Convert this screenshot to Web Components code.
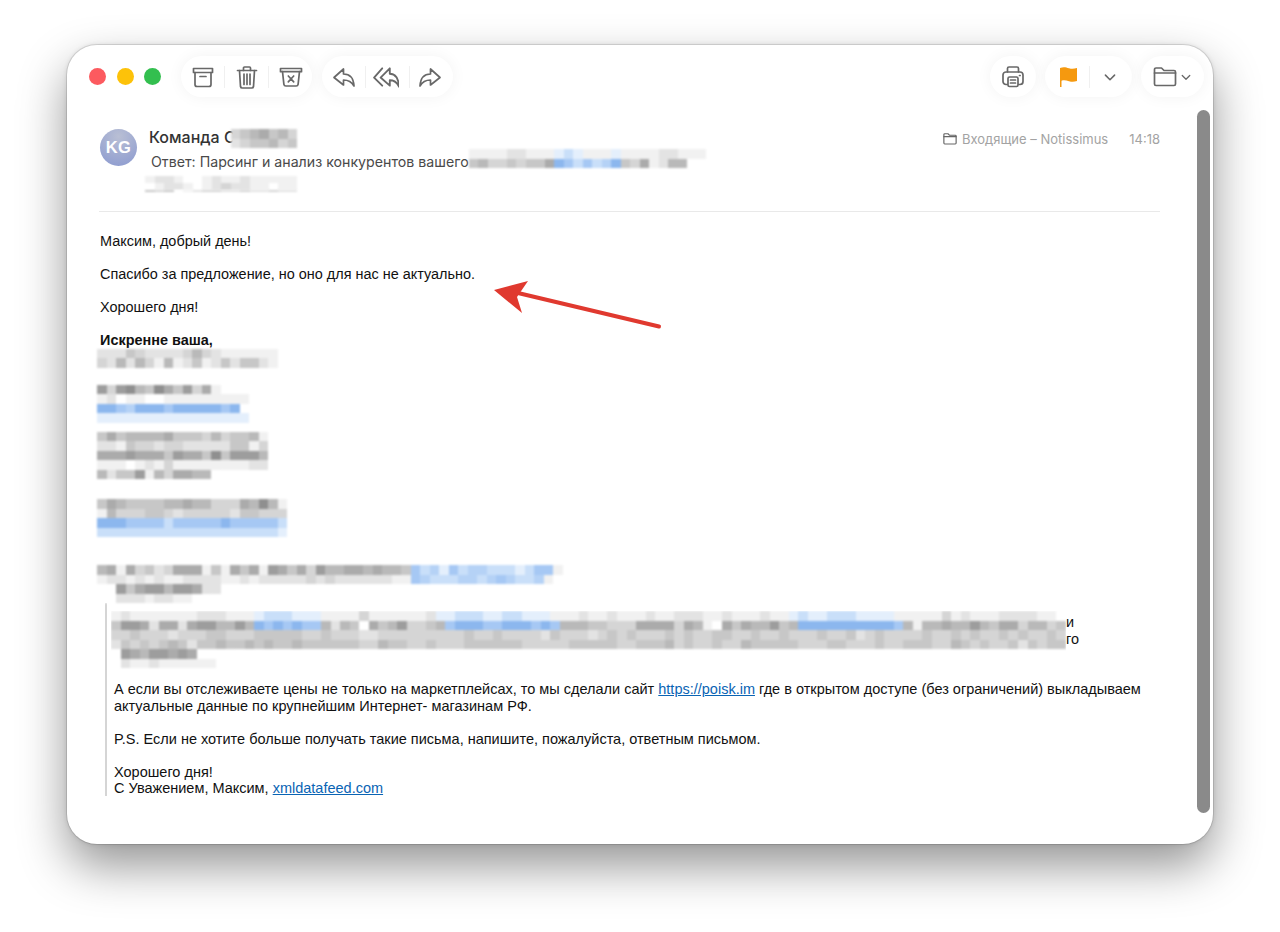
<!DOCTYPE html>
<html lang="ru">
<head>
<meta charset="utf-8">
<title>Mail</title>
<style>
  html, body { margin: 0; background: #fff; }
  body { padding: 45px 67px 0; height: 932px; box-sizing: border-box; overflow: hidden; }
</style>
</head>
<body>
<mail-window>
  <mail-toolbar></mail-toolbar>
  <mail-header></mail-header>
  <mail-body></mail-body>
</mail-window>

<script>
// redaction mosaic: each char of a row is one cell. 0-9 gray level, a-e blue
const CELL_COLORS = { a: "#a6c8f4", b: "#8cb7ee", c: "#c9dff9", d: "#e4effc", e: "#b5d2f6" };
const cellColor = (c) => {
  if (CELL_COLORS[c]) return CELL_COLORS[c];
  const v = 255 - Number(c) * 14;
  return `rgb(${v},${v},${v})`;
};

class PixelBlock extends HTMLElement {
  constructor() {
    super();
    this.attachShadow({ mode: "open" });
  }
  connectedCallback() {
    const rows = (this.getAttribute("rows") || "").split("|");
    const w = this.getAttribute("cw") || 9.5;
    const h = this.getAttribute("ch") || 9.5;
    const html = rows.map((r) => {
      const cells = [...r].map((c) => `<i style="background:${cellColor(c)}"></i>`).join("");
      return `<div class="r">${cells}</div>`;
    }).join("");
    this.shadowRoot.innerHTML = `
      <style>
        :host { display: block; flex: none; }
        .wrap { filter: blur(1px); }
        .r { display: flex; height: ${h}px; }
        i { display: block; width: ${w}px; flex: none; }
      </style>
      <div class="wrap">${html}</div>
    `;
  }
}

const ICONS = {
  archive: `<path d="M2.5 3.5h19v4h-19z"/><path d="M4 7.5V19.5a2 2 0 0 0 2 2h12a2 2 0 0 0 2-2V7.5"/><path d="M9 11.5h6"/>`,
  trash: `<path d="M2.5 5.5h19"/><path d="M8.5 5.5V3a1 1 0 0 1 1-1h5a1 1 0 0 1 1 1v2.5"/><path d="M4.5 5.5l1 16a1.8 1.8 0 0 0 1.8 1.5h9.4a1.8 1.8 0 0 0 1.8-1.5l1-16"/><path d="M9 9v10.5M12 9v10.5M15 9v10.5"/>`,
  junk: `<path d="M1.5 3.5h21v3.2h-21z"/><path d="M3.5 6.7l1.4 12.6a2 2 0 0 0 2 1.7h10.2a2 2 0 0 0 2-1.7l1.4-12.6"/><path d="M9.3 11l5.4 5.8M14.7 11l-5.4 5.8"/>`,
  reply: `<path d="M2 12.5L11.5 4v5c5.5 0 10 3 10.5 12-2.5-4.5-6-6-10.500-6v5z"/>`,
  replyall: `<path d="M8.500 4L1 12.500 8.500 20"/><path d="M7 12.500L15.500 4v5c4.500 0 8 3 8.500 12-2-4.500-5-6-8.500-6v5z"/>`,
  forward: `<path d="M22 12.500L12.500 4v5C7 9 2.500 12 2 21c2.500-4.500 6-6 10.500-6v5z"/>`,
  printer: `<path d="M6.500 7V3.500a1.500 1.500 0 0 1 1.500-1.500h8a1.500 1.500 0 0 1 1.500 1.500V7"/><rect x="2" y="7" width="20" height="12.500" rx="3"/><rect x="7" y="12" width="10" height="9.500" rx="1.500" fill="#fff"/><path d="M9.500 15h5M9.500 18h5"/><path d="M18.500 10.500h.6"/>`,
  folder: `<path d="M1.500 6V4.500a1.500 1.500 0 0 1 1.500-1.500h5.500l2.500 2.500h10a1.500 1.500 0 0 1 1.500 1.500v12a1.500 1.500 0 0 1-1.500 1.500H3A1.500 1.500 0 0 1 1.500 19z"/><path d="M1.500 8h21"/>`,
  chevron: `<path d="M7 10l5 5 5-5"/>`,
};

class ToolIcon extends HTMLElement {
  constructor() {
    super();
    this.attachShadow({ mode: "open" });
  }
  connectedCallback() {
    const name = this.getAttribute("name");
    const size = this.getAttribute("size") || 24;
    this.shadowRoot.innerHTML = `
      <style>
        :host { display: flex; align-items: center; justify-content: center; flex: none; }
        svg { display: block; fill: none; stroke: var(--icon-color, #686868); stroke-width: ${this.getAttribute("sw") || 1.7}; stroke-linejoin: round; stroke-linecap: round; }
      </style>
      <svg width="${size}" height="${size}" viewBox="0 0 24 24">${ICONS[name]}</svg>
    `;
  }
}

class ToolPill extends HTMLElement {
  constructor() {
    super();
    this.attachShadow({ mode: "open" });
    this.shadowRoot.innerHTML = `
      <style>
        :host {
          display: flex; align-items: center; height: 41px; border-radius: 21px;
          background: #fff; box-shadow: 0 0 16px rgba(0,0,0,0.05); flex: none;
        }
      </style>
      <slot></slot>
    `;
  }
}

class ToolBtn extends HTMLElement {
  constructor() {
    super();
    this.attachShadow({ mode: "open" });
    this.shadowRoot.innerHTML = `
      <style>
        :host { display: flex; align-items: center; justify-content: center; height: 22px; flex: none; box-sizing: border-box; }
        :host([sep]) { border-left: 1px solid #f0f0f0; }
      </style>
      <slot></slot>
    `;
  }
}

class MailToolbar extends HTMLElement {
  constructor() {
    super();
    this.attachShadow({ mode: "open" });
    this.shadowRoot.innerHTML = `
      <style>
        :host { display: flex; align-items: center; height: 41px; padding: 11px 9px 0 22px; }
        .lights { display: flex; gap: 10.500px; margin-right: 20px; }
        .lights i { width: 17px; height: 17px; border-radius: 50%; display: block; }
        .sp { flex: 1; }
        .g { margin-right: 9px; }
        .first { margin-right: 10px; }
        .flag { fill: #f5990f; stroke: none; }
      </style>
      <div class="lights">
        <i style="background:#fc5a5f"></i>
        <i style="background:#fdc209"></i>
        <i style="background:#33bf4f"></i>
      </div>
      <tool-pill class="first">
        <tool-btn style="width:43px"><tool-icon name="archive"></tool-icon></tool-btn>
        <tool-btn sep style="width:44px"><tool-icon name="trash"></tool-icon></tool-btn>
        <tool-btn sep style="width:44px"><tool-icon name="junk"></tool-icon></tool-btn>
      </tool-pill>
      <tool-pill>
        <tool-btn style="width:43px"><tool-icon name="reply"></tool-icon></tool-btn>
        <tool-btn sep style="width:44px;padding-right:3px"><tool-icon name="replyall" size="26"></tool-icon></tool-btn>
        <tool-btn sep style="width:44px;padding-right:3px"><tool-icon name="forward"></tool-icon></tool-btn>
      </tool-pill>
      <div class="sp"></div>
      <tool-pill class="g">
        <tool-btn style="width:46px"><tool-icon name="printer"></tool-icon></tool-btn>
      </tool-pill>
      <tool-pill class="g">
        <tool-btn style="width:44px;padding-left:3px">
          <svg width="20" height="22" viewBox="0 0 20 22"><path class="flag" d="M1 2c4-1.500 6-.5 9 .3 3 .8 5 .6 8-.3v13c-3 1-5 1-8 .2-3-.8-5-1.200-7.500-.4V21H1z"/></svg>
        </tool-btn>
        <tool-btn sep style="width:43px;padding-right:3px"><tool-icon name="chevron" size="22"></tool-icon></tool-btn>
      </tool-pill>
      <tool-pill>
        <tool-btn style="width:63px;padding-left:2px"><tool-icon name="folder" size="24"></tool-icon><tool-icon name="chevron" size="18"></tool-icon></tool-btn>
      </tool-pill>
    `;
  }
}

class MailHeader extends HTMLElement {
  constructor() {
    super();
    this.attachShadow({ mode: "open" });
    this.shadowRoot.innerHTML = `
      <style>
        :host {
          display: flex; margin: 33px 53px 0 32px; height: 82px; box-sizing: border-box;
          border-bottom: 1px solid #e9e9e9; padding-left: 1px;
          font-family: Inter, "Noto Sans", sans-serif; color: #333;
        }
        .avatar {
          width: 37px; height: 37px; border-radius: 50%; margin-top: -1px; flex: none;
          background: radial-gradient(circle at 50% 20%, #b9bfd4, #8f9dd0 90%);
          color: #fff; font: 700 16.500px/37px "Liberation Sans", sans-serif; text-align: center; letter-spacing: .3px;
        }
        .col { flex: 1; margin-left: 12px; min-width: 0; }
        .name { display: flex; height: 18px; font-size: 16px; font-weight: 500; line-height: 18px; color: #333; margin-top: -2px; }
        .name pixel-block { margin: 1px 0 0 -5px; }
        .subj { display: flex; margin: 6px 0 0 2px; height: 20px; font-size: 14.200px; line-height: 20px; color: #4a4a4a; white-space: nowrap; }
        .subj pixel-block { margin-top: -3px; }
        .to { margin: 4px 0 0 -4px; }
        .meta { display: flex; align-items: center; height: 18px; font-size: 13px; color: #a3a3a3; white-space: nowrap; }
        .meta tool-icon { --icon-color: #666; margin-right: 5px; }
        .time { margin-left: 21px; }
      </style>
      <div class="avatar">KG</div>
      <div class="col">
        <div class="name">Команда С<pixel-block cw="9.500" rows="3456453|2344534"></pixel-block></div>
        <div class="subj">Ответ: Парсинг и анализ конкурентов вашего<pixel-block cw="9.500" rows="111122111dcd111d111122111|453343446bacaceb4361255"></pixel-block></div>
        <div class="to">
          <pixel-block cw="9.500" ch="7" rows="1221001211211111000|0122101232211011000"></pixel-block>
          <pixel-block cw="9.500" ch="2" rows="4340123322322322000"></pixel-block>
        </div>
      </div>
      <div class="meta">
        <tool-icon name="folder" size="14" sw="2"></tool-icon>Входящие – Notissimus<span class="time">14:18</span>
      </div>
    `;
  }
}

class MailBody extends HTMLElement {
  constructor() {
    super();
    this.attachShadow({ mode: "open" });
    this.shadowRoot.innerHTML = `
      <style>
        :host {
          display: block; margin: 21px 0 0 33px; width: 1064px; position: relative;
          font: 14.450px/16.500px "Liberation Sans", Arial, sans-serif; color: #111;
        }
        p { margin: 0 0 16.500px; white-space: nowrap; }
        .sign { margin: 0; font-weight: 700; }
        pixel-block { margin-left: -3px; }
        .quote { margin: 0 0 0 5px; border-left: 2px solid #d5d5d5; padding-left: 7px; height: 193px; box-sizing: border-box; }
        .quote pixel-block { margin-left: -3px; width: 955px; overflow: hidden; }
        .qrow { display: flex; padding-top: 8px; height: 69px; box-sizing: border-box; }
        .tail { margin: 3px 0 0 0; }
        .qtext { margin-top: 9px; font-size: 14.500px; }
        .qtext p { margin-bottom: 16.500px; }
        a { color: #0a64b4; text-decoration: underline; }
        .arrow { position: absolute; left: 318px; top: 0; }
      </style>
      <p>Максим, добрый день!</p>
      <p>Спасибо за предложение, но оно для нас не актуально.</p>
      <p>Хорошего дня!</p>
      <div class="sign">Искренне ваша,</div>
      <pixel-block rows="2224322223532111111|3252531512412424421"></pixel-block>
      <pixel-block style="margin-top:17px" rows="7378548647361|1201100111111111|bbaebbbabbbbbab|dddddddddddddddd"></pixel-block>
      <pixel-block style="margin-top:9px" rows="464555564443534451|221433233222224413|666766647664847775|111012131111111122|5244715366550"></pixel-block>
      <pixel-block style="margin-top:20px" rows="46544445565533365851|15333443233333244333|bbbaaaacaaaaabaaaaac|cccccccccccccccccccd"></pixel-block>
      <pixel-block style="margin-top:28px" rows="561634236661416461764637556656554acedaceecccdcaa1|122121211222211212222232322222211aeccceeceaecce1|0074677577622|002221221100"></pixel-block>
      <div class="quote">
        <div class="qrow">
          <pixel-block cw="9.550" rows="121111111222111dcccddd111131111112ddcccddccddd1112112111211222112111211dcddcccdddd11111312111222211|477626626775575bababaa5254064573345abbbaabbbaba5554433366663651064655745bbbbbbbbbba51556557546635534|3343332333443334444433433322333333333433433332433323434333434334433433433343342343333433434334343343|2434345424454454544544444433544334333444444333334444433444534334335444443334433343344433543433424344|0765776760000|0211211111100"></pixel-block>
          <div class="tail">и<br>го</div>
        </div>
        <div class="qtext">
          <p>А если вы отслеживаете цены не только на маркетплейсах, то мы сделали сайт <a>https://poisk.im</a> где в открытом доступе (без ограничений) выкладываем<br>актуальные данные по крупнейшим Интернет- магазинам РФ.</p>
          <p>P.S. Если не хотите больше получать такие письма, напишите, пожалуйста, ответным письмом.</p>
          <div>Хорошего дня!<br>С Уважением, Максим, <a>xmldatafeed.com</a></div>
        </div>
      </div>
      <svg class="arrow" width="260" height="110" viewBox="0 0 260 110">
        <path d="M241 93.500L100 60" stroke="#e0392f" stroke-width="4" stroke-linecap="round" fill="none"/>
        <path d="M76 57L110 48 99 64 104 80z" fill="#e0392f"/>
      </svg>
    `;
  }
}

class MailWindow extends HTMLElement {
  constructor() {
    super();
    this.attachShadow({ mode: "open" });
    this.shadowRoot.innerHTML = `
      <style>
        :host {
          display: block; position: relative; width: 1146px; height: 799px; background: #fff;
          border-radius: 30px; overflow: visible;
          box-shadow: 0 0 0 1px rgba(0,0,0,0.1), 0 0 5px rgba(0,0,0,0.12), 0 22px 48px rgba(0,0,0,0.42);
        }
        .thumb { position: absolute; left: 1130px; top: 65px; width: 13px; height: 703px; border-radius: 7px; background: #8a8a8a; }
      </style>
      <slot></slot>
      <div class="thumb"></div>
    `;
  }
}

customElements.define("pixel-block", PixelBlock);
customElements.define("tool-icon", ToolIcon);
customElements.define("tool-pill", ToolPill);
customElements.define("tool-btn", ToolBtn);
customElements.define("mail-toolbar", MailToolbar);
customElements.define("mail-header", MailHeader);
customElements.define("mail-body", MailBody);
customElements.define("mail-window", MailWindow);
</script>
</body>
</html>
